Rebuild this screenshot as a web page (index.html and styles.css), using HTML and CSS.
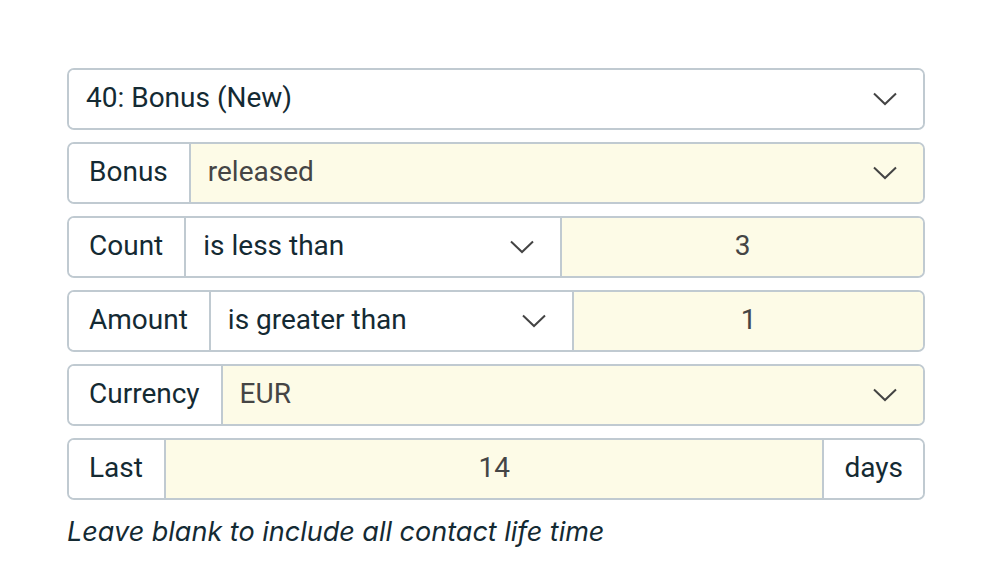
FILE: index.html
```html
<!DOCTYPE html>
<html>
<head>
<meta charset="utf-8">
<link rel="stylesheet" href="styles.css">
</head>
<body>
<div class="form">
  <div class="row">
    <div class="select plain">
      <span class="value dark">40: Bonus (New)</span>
      <svg class="chev" viewBox="0 0 24 14"><path d="M1 1.5 L12 12 L23 1.5" /></svg>
    </div>
  </div>
  <div class="row two">
    <div class="label">Bonus</div>
    <div class="select filled">
      <span class="value">released</span>
      <svg class="chev" viewBox="0 0 24 14"><path d="M1 1.5 L12 12 L23 1.5" /></svg>
    </div>
  </div>
  <div class="row three">
    <div class="label">Count</div>
    <div class="select plain">
      <span class="value dark">is less than</span>
      <svg class="chev" viewBox="0 0 24 14"><path d="M1 1.5 L12 12 L23 1.5" /></svg>
    </div>
    <div class="input sep">3</div>
  </div>
  <div class="row three">
    <div class="label">Amount</div>
    <div class="select plain">
      <span class="value dark">is greater than</span>
      <svg class="chev" viewBox="0 0 24 14"><path d="M1 1.5 L12 12 L23 1.5" /></svg>
    </div>
    <div class="input sep">1</div>
  </div>
  <div class="row two">
    <div class="label">Currency</div>
    <div class="select filled">
      <span class="value">EUR</span>
      <svg class="chev" viewBox="0 0 24 14"><path d="M1 1.5 L12 12 L23 1.5" /></svg>
    </div>
  </div>
  <div class="row addon">
    <div class="label">Last</div>
    <div class="input">14</div>
    <div class="label suffix">days</div>
  </div>
  <p class="help">Leave blank to include all contact life time</p>
</div>
</body>
</html>
```
FILE: styles.css
```css
* { box-sizing: border-box; }
html, body { margin: 0; padding: 0; background: #ffffff; }
body { font-family: Roboto, "Noto Sans", sans-serif; color: #142a33; }
.form {
  width: 858px;
  margin: 68px 0 0 67px;
  display: flex;
  flex-direction: column;
  gap: 12px;
}
.row {
  display: grid;
  grid-template-columns: 1fr;
  height: 62px;
  border: 2px solid #c0cad1;
  border-radius: 7px;
  overflow: hidden;
  font-size: 28px;
  line-height: 1;
}
.row.two { grid-template-columns: auto 1fr; }
.row.three { grid-template-columns: auto 1.03fr 1fr; }
.row.addon { grid-template-columns: auto 1fr auto; }
.label {
  display: flex;
  align-items: center;
  padding: 0 21px 3px 20px;
  background: #fff;
  color: #142a33;
  border-right: 2px solid #c0cad1;
  white-space: nowrap;
}
.label.suffix { border-right: none; border-left: 2px solid #c0cad1; padding-left: 20px; padding-right: 20px; }
.select {
  display: flex;
  align-items: center;
  justify-content: space-between;
  padding: 0 26px 3px 17px;
  min-width: 0;
}
.select .chev { margin-top: 3px; }
.select.plain { background: #fff; }
.select.filled { background: #fdfbe7; }
.value { color: #454545; white-space: nowrap; }
.value.dark { color: #142a33; }
.chev {
  width: 24px;
  height: 14px;
  fill: none;
  stroke: #444;
  stroke-width: 2;
  flex: none;
}
.input {
  display: flex;
  align-items: center;
  justify-content: center;
  padding-bottom: 3px;
  background: #fdfbe7;
  color: #454545;
  min-width: 0;
}
.input.sep { border-left: 2px solid #c0cad1; }
.help {
  margin: 3px 0 0 0;
  font-family: Inter, Roboto, sans-serif;
  font-style: italic;
  font-size: 27px;
  color: #142a33;
}
```
